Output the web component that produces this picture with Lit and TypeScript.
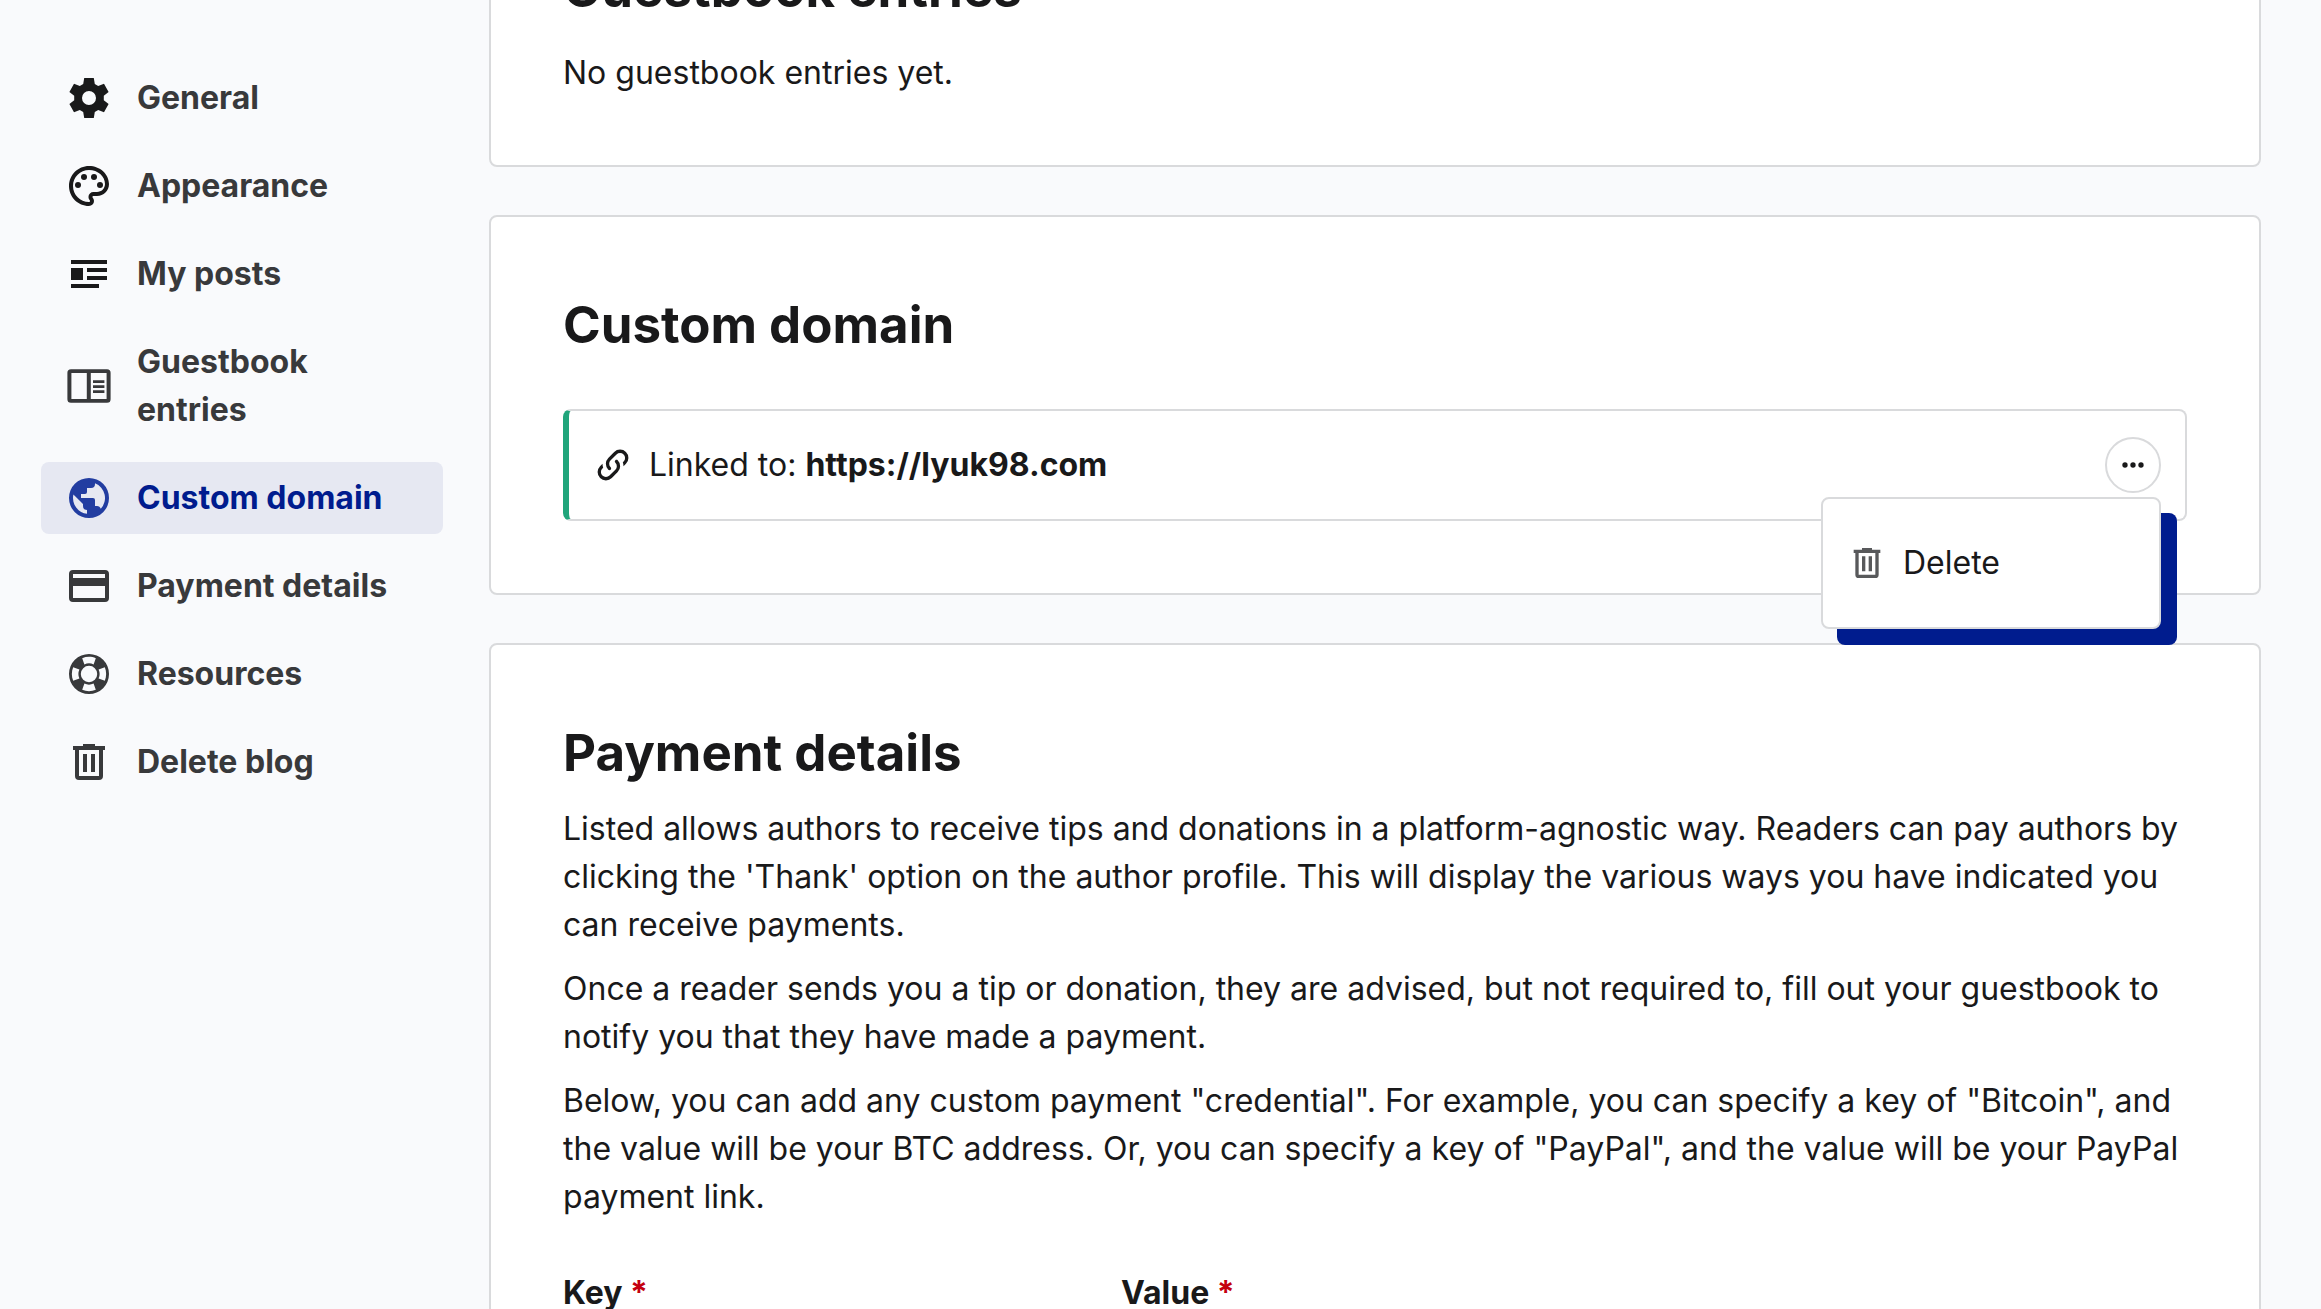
import { LitElement, html, css, svg } from "lit";
import { customElement, state } from "lit/decorators.js";
import { classMap } from "lit/directives/class-map.js";

const icons = {
  gear: svg`<path fill-rule="evenodd" d="M9.6 2h4.8l.5 3 1.7 1 2.900-1.100 2.300 4.100-2.400 1.900v2.200l2.400 1.900-2.300 4.100-2.900-1.100-1.700 1-.5 3H9.600l-.5-3-1.700-1-2.900 1.100L2.200 15l2.400-1.900v-2.200L2.200 9l2.300-4.100L7.400 6l1.700-1zM12 8.500a3.500 3.500 0 1 0 0 7 3.500 3.500 0 0 0 0-7z"/>`,
  palette: svg`<path fill-rule="evenodd" d="M12 22C6.490 22 2 17.510 2 12S6.490 2 12 2s10 4.040 10 9c0 3.310-2.690 6-6 6h-1.770c-.28 0-.5.220-.5.500 0 .120.050.230.130.330.410.470.640 1.060.640 1.670A2.500 2.500 0 0 1 12 22zm0-18c-4.410 0-8 3.590-8 8s3.590 8 8 8c.28 0 .5-.220.500-.500a.54.54 0 0 0-.140-.350c-.410-.460-.630-1.050-.630-1.650a2.500 2.500 0 0 1 2.500-2.500H16c2.210 0 4-1.790 4-4 0-3.860-3.590-7-8-7z"/><circle cx="6.500" cy="11.500" r="1.500"/><circle cx="9.500" cy="7.500" r="1.500"/><circle cx="14.500" cy="7.500" r="1.500"/><circle cx="17.500" cy="11.500" r="1.500"/>`,
  posts: svg`<path d="M3 5h18v2H3zM3 9h6v6H3zM11 9h10v2H11zM11 13h10v2H11zM3 17h14v2H3z"/>`,
  reader: svg`<path fill-rule="evenodd" d="M3 3.600h18A1.800 1.800 0 0 1 22.800 5.400v13.200a1.800 1.800 0 0 1-1.800 1.800H3a1.800 1.800 0 0 1-1.800-1.800V5.400A1.800 1.800 0 0 1 3 3.600zM3.200 5.500v13h7.700v-13zM12.900 5.500v13h7.900v-13z"/><path d="M14 9.100h5.700v1.400H14zM14 11.600h5.700V13H14zM14 14.100h5.700v1.400H14z"/>`,
  globe: svg`<path d="M17.900 17.390c-.260-.800-1.010-1.390-1.900-1.390h-1v-3a1 1 0 0 0-1-1H8v-2h2a1 1 0 0 0 1-1V7h2a2 2 0 0 0 2-2v-.410a7.984 7.984 0 0 1 2.900 12.800M11 19.930c-3.950-.490-7-3.850-7-7.930 0-.620.080-1.220.210-1.790L9 15v1a2 2 0 0 0 2 2m1-16A10 10 0 0 0 2 12a10 10 0 0 0 10 10 10 10 0 0 0 10-10A10 10 0 0 0 12 2z"/>`,
  card: svg`<path fill-rule="evenodd" d="M4 4h16a2 2 0 0 1 2 2v12a2 2 0 0 1-2 2H4a2 2 0 0 1-2-2V6a2 2 0 0 1 2-2zM4 6v2h16V6zM4 12v6h16v-6z"/>`,
  lifebuoy: svg`<path fill-rule="evenodd" d="M12 2a10 10 0 1 0 0 20 10 10 0 0 0 0-20zM12 7.900a4.100 4.100 0 1 1 0 8.200 4.100 4.100 0 0 1 0-8.200zM8.600 4.100c2.100-.9 4.700-.9 6.800 0l-1.100 3.100a5.600 5.600 0 0 0-4.600 0zM19.900 8.600c.9 2.100.9 4.700 0 6.800l-3.100-1.100a5.600 5.600 0 0 0 0-4.600zM8.600 19.900c2.100.9 4.700.9 6.800 0l-1.100-3.100a5.600 5.600 0 0 1-4.600 0zM4.100 8.600c-.9 2.100-.9 4.700 0 6.800l3.100-1.100a5.600 5.600 0 0 1 0-4.600z"/>`,
  trash: svg`<path fill-rule="evenodd" d="M9 3v1H4v2h1v13a2 2 0 0 0 2 2h10a2 2 0 0 0 2-2V6h1V4h-5V3zM7 6h10v13H7zM9 8v9h2V8zM13 8v9h2V8z"/>`,
  link: svg`<path d="M10.590 13.410c.410.390.410 1.030 0 1.420-.390.390-1.030.390-1.420 0a5.003 5.003 0 0 1 0-7.070l3.540-3.540a5.003 5.003 0 0 1 7.070 0 5.003 5.003 0 0 1 0 7.070l-1.490 1.490c.010-.820-.120-1.640-.400-2.420l.470-.480a2.982 2.982 0 0 0 0-4.240 2.982 2.982 0 0 0-4.240 0l-3.530 3.530a2.982 2.982 0 0 0 0 4.240m2.820-4.240c.390-.390 1.030-.390 1.420 0a5.003 5.003 0 0 1 0 7.070l-3.540 3.540a5.003 5.003 0 0 1-7.070 0 5.003 5.003 0 0 1 0-7.070l1.490-1.490c-.010.820.120 1.640.400 2.430l-.470.470a2.982 2.982 0 0 0 0 4.240 2.982 2.982 0 0 0 4.240 0l3.530-3.530a2.982 2.982 0 0 0 0-4.240.973.973 0 0 1 0-1.420z"/>`,
  more: svg`<circle cx="5" cy="12" r="2"/><circle cx="11" cy="12" r="2"/><circle cx="17" cy="12" r="2"/>`,
};

type IconName = keyof typeof icons;

const icon = (name: IconName, box = "0 0 24 24") =>
  html`<svg class="icon" viewBox=${box} fill="currentColor" aria-hidden="true">${icons[name]}</svg>`;

interface NavItem {
  id: string;
  label: string;
  icon: IconName;
  dark?: boolean;
}

const navItems: NavItem[] = [
  { id: "general", label: "General", icon: "gear", dark: true },
  { id: "appearance", label: "Appearance", icon: "palette", dark: true },
  { id: "posts", label: "My posts", icon: "posts", dark: true },
  { id: "guestbook", label: "Guestbook entries", icon: "reader" },
  { id: "domain", label: "Custom domain", icon: "globe" },
  { id: "payment", label: "Payment details", icon: "card" },
  { id: "resources", label: "Resources", icon: "lifebuoy" },
  { id: "delete", label: "Delete blog", icon: "trash" },
];

@customElement("app-root")
export class AppRoot extends LitElement {
  @state() private active = "domain";
  @state() private menuOpen = true;

  static styles = css`
    :host {
      display: block;
      height: 100vh;
      overflow: hidden;
      background: #f9fafc;
      color: #19191a;
      font: 400 32px/48px Inter, "Liberation Sans", sans-serif;
    }
    * {
      box-sizing: border-box;
    }
    .layout {
      display: grid;
      grid-template-columns: 402px minmax(0, 1fr);
      column-gap: 46px;
      padding: 0 60px 0 41px;
    }
    .sidebar {
      display: flex;
      flex-direction: column;
      gap: 16px;
      padding-top: 62px;
    }
    .nav-link {
      display: flex;
      align-items: center;
      gap: 24px;
      padding: 12px 24px;
      border-radius: 8px;
      color: #38393b;
      font-weight: 700;
      text-decoration: none;
    }
    .icon {
      flex: none;
      display: block;
      width: 48px;
      height: 48px;
    }
    .dark .icon {
      color: #19191a;
    }
    .active {
      background: #e6e8f2;
      color: #001c8e;
    }
    .active .icon {
      color: #223da1;
    }
    .content {
      display: flex;
      flex-direction: column;
      gap: 48px;
      /* The scroll position hides the top of the guestbook card. */
      margin-top: -121px;
    }
    .card {
      padding: 72px;
      border: 2px solid #d9dadc;
      border-radius: 8px;
      background: #fff;
    }
    h2 {
      margin: 0;
      font-size: 51px;
      line-height: 72px;
      font-weight: 700;
    }
    p {
      margin: 0;
    }
    .empty {
      margin-top: 28px;
      line-height: 40px;
    }
    .domain {
      position: relative;
      display: flex;
      align-items: center;
      gap: 16px;
      margin-top: 48px;
      padding: 26px 24px;
      border: 2px solid #d9dadc;
      border-left: 6px solid #20a57b;
      border-radius: 8px;
    }
    .domain > .icon,
    .menu .icon {
      width: 40px;
      height: 40px;
    }
    .domain-text {
      flex: 1;
    }
    .more {
      display: grid;
      place-items: center;
      width: 56px;
      height: 56px;
      padding: 0;
      border: 2px solid #d9dadc;
      border-radius: 50%;
      background: #fff;
      color: inherit;
    }
    .more .icon {
      width: 32px;
      height: 32px;
    }
    .menu {
      position: absolute;
      top: 86px;
      right: 24px;
      z-index: 1;
      width: 340px;
      padding: 32px 0;
      border: 2px solid #d9dadc;
      border-radius: 8px;
      background: #fff;
      box-shadow: 16px 16px 0 #001c8e;
    }
    .menu-item {
      display: flex;
      align-items: center;
      gap: 16px;
      width: 100%;
      padding: 8px 24px;
      border: 0;
      background: none;
      color: inherit;
      font: inherit;
    }
    .menu .icon {
      color: #58595b;
    }
    .copy {
      display: flex;
      flex-direction: column;
      gap: 16px;
      margin-top: 16px;
    }
    .fields {
      display: grid;
      grid-template-columns: 510px minmax(0, 1fr);
      column-gap: 48px;
      margin-top: 48px;
    }
    .field {
      display: flex;
      flex-direction: column;
      gap: 16px;
    }
    label {
      font-weight: 700;
    }
    .required {
      color: #c4000f;
    }
    input {
      height: 72px;
      padding: 0 24px;
      border: 2px solid #d9dadc;
      border-radius: 8px;
      font: inherit;
    }
  `;

  render() {
    return html`
      <div class="layout">
        <nav class="sidebar">
          ${navItems.map(
            (item) => html`<a
              class=${classMap({ "nav-link": true, dark: !!item.dark, active: item.id === this.active })}
              href="#${item.id}"
              @click=${() => (this.active = item.id)}
              >${icon(item.icon)}<span>${item.label}</span></a
            >`
          )}
        </nav>
        <main class="content">
          <section class="card">
            <h2>Guestbook entries</h2>
            <p class="empty">No guestbook entries yet.</p>
          </section>
          <section class="card">
            <h2>Custom domain</h2>
            <div class="domain">
              ${icon("link")}
              <span class="domain-text">Linked to: <strong>https://lyuk98.com</strong></span>
              <button class="more" type="button" aria-label="Options" @click=${() => (this.menuOpen = !this.menuOpen)}>
                ${icon("more", "-1 0 24 24")}
              </button>
              ${this.menuOpen
                ? html`<div class="menu">
                    <button class="menu-item" type="button">${icon("trash")}<span>Delete</span></button>
                  </div>`
                : null}
            </div>
          </section>
          <section class="card">
            <h2>Payment details</h2>
            <div class="copy">
              <p>
                Listed allows authors to receive tips and donations in a platform-agnostic way. Readers can pay authors
                by clicking the 'Thank' option on the author profile. This will display the various ways you have
                indicated you can receive payments.
              </p>
              <p>
                Once a reader sends you a tip or donation, they are advised, but not required to, fill out your
                guestbook to notify you that they have made a payment.
              </p>
              <p>
                Below, you can add any custom payment "credential". For example, you can specify a key of "Bitcoin", and
                the value will be your BTC address. Or, you can specify a key of "PayPal", and the value will be your
                PayPal payment link.
              </p>
            </div>
            <form class="fields">
              <div class="field">
                <label for="key">Key <span class="required">*</span></label>
                <input id="key" type="text" required />
              </div>
              <div class="field">
                <label for="value">Value <span class="required">*</span></label>
                <input id="value" type="text" required />
              </div>
            </form>
          </section>
        </main>
      </div>
    `;
  }
}
